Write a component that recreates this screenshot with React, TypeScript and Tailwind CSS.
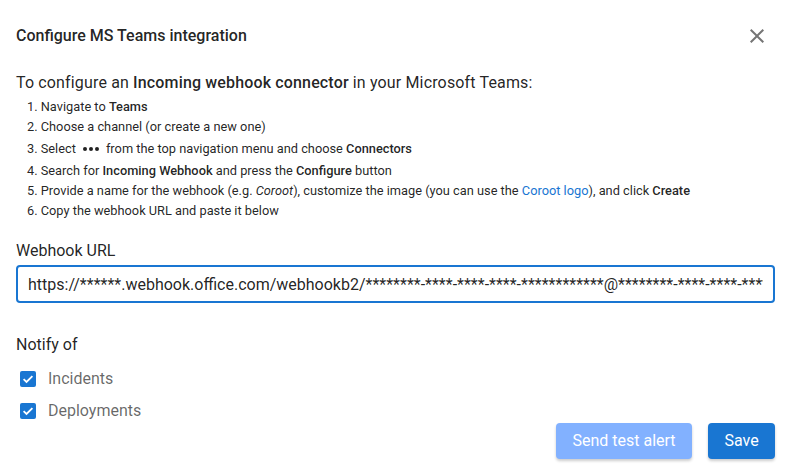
const url =
  "https://******.webhook.office.com/webhookb2/********-****-****-****-************@********-****-****-****-************/IncomingWebhook/********************************/********-****-****-****-************";

function CheckRow({ label }: { label: string }) {
  return (
    <label className="flex h-8 items-center">
      <span className="ml-1 grid h-4 w-4 place-items-center rounded-[2px] bg-[#1976d2]">
        <svg viewBox="0 0 16 16" className="h-4 w-4">
          <path d="M3.6 8.2l2.9 2.8 5.9-5.9" fill="none" stroke="white" strokeWidth="1.8" />
        </svg>
      </span>
      <span className="ml-3 text-[16px] text-[rgba(0,0,0,0.6)]">{label}</span>
    </label>
  );
}

export default function App() {
  return (
    <div className="h-[476px] w-[791px] overflow-hidden bg-white px-4 font-['Roboto',sans-serif] text-[rgba(0,0,0,0.87)]">
      <div className="flex h-[69px] items-center justify-between">
        <h1 className="mt-[2px] text-[16px] font-medium">Configure MS Teams integration</h1>
        <button className="mr-[6px] mt-[2px] text-[#757575]" type="button">
          <svg viewBox="0 0 24 24" className="h-6 w-6" fill="currentColor">
            <path d="M19 6.41L17.59 5 12 10.59 6.41 5 5 6.41 10.59 12 5 17.59 6.41 19 12 13.41 17.59 19 19 17.59 13.41 12z" />
          </svg>
        </button>
      </div>

      <p className="text-[16px] leading-[28px] tracking-[0.15px]">
        To configure an <b className="font-medium">Incoming webhook connector</b> in your Microsoft Teams:
      </p>
      <ol className="pl-[11px] text-[12.8px] leading-5">
        <li>
          1. Navigate to <b className="font-medium">Teams</b>
        </li>
        <li>2. Choose a channel (or create a new one)</li>
        <li className="flex h-6 items-center">
          3. Select
          <svg viewBox="0 0 16 4" className="mx-[7px] h-[4px] w-4" fill="currentColor">
            <circle cx="2" cy="2" r="2" />
            <circle cx="8" cy="2" r="2" />
            <circle cx="14" cy="2" r="2" />
          </svg>
          from the top navigation menu and choose&nbsp;<b className="font-medium">Connectors</b>
        </li>
        <li>
          4. Search for <b className="font-medium">Incoming Webhook</b> and press the{" "}
          <b className="font-medium">Configure</b> button
        </li>
        <li>
          5. Provide a name for the webhook (e.g. <i>Coroot</i>), customize the image (you can use the{" "}
          <a className="text-[#1976d2]">Coroot logo</a>), and click <b className="font-medium">Create</b>
        </li>
        <li>6. Copy the webhook URL and paste it below</li>
      </ol>

      <div className="mt-[18px] text-[16px] leading-6">Webhook URL</div>
      <input
        className="mt-[2px] h-[38px] w-full rounded-[4px] border-2 border-[#1976d2] px-[10px] text-[16px] text-[rgba(0,0,0,0.87)] outline-none"
        readOnly
        value={url}
      />

      <div className="flex justify-between">
        <div className="mt-[30px]">
          <div className="text-[16px] leading-6">Notify of</div>
          <div className="mt-[6px]">
            <CheckRow label="Incidents" />
            <CheckRow label="Deployments" />
          </div>
        </div>
        <div className="mt-[120px] flex gap-4">
          <button
            className="h-9 w-[136px] rounded-[4px] bg-[#82b1ff] text-[16px] text-white shadow-[0_2px_3px_rgba(0,0,0,0.2)]"
            type="button"
          >
            Send test alert
          </button>
          <button
            className="h-9 w-[67px] rounded-[4px] bg-[#1976d2] text-[16px] text-white shadow-[0_2px_3px_rgba(0,0,0,0.2)]"
            type="button"
          >
            Save
          </button>
        </div>
      </div>
    </div>
  );
}
